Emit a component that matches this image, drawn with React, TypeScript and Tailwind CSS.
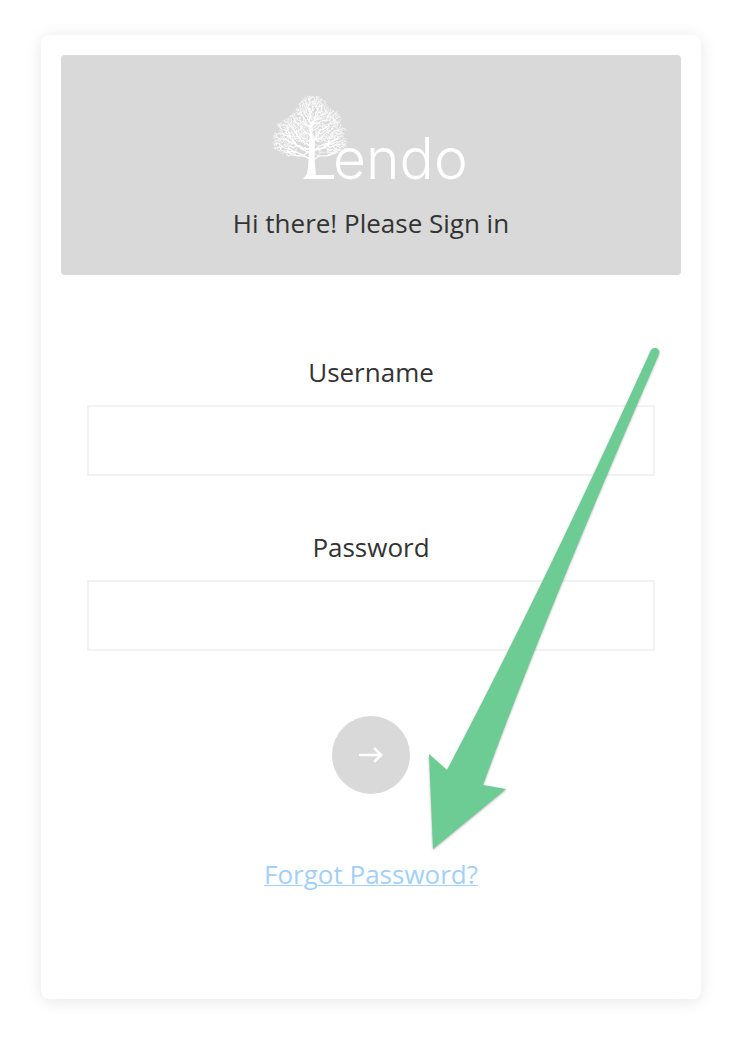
import type { FormEvent } from "react";

type Twig = { x: number; y: number; parent: number; depth: number; load: number };

// outline of the crown: [y, left, right]
const CROWN = [
  [1, 33, 44],
  [5, 28, 50],
  [14, 24, 57],
  [18, 22, 66],
  [24, 14, 67],
  [29, 3, 66],
  [34, 8, 71],
  [40, 2, 72],
  [48, -1, 74],
  [54, 1, 73],
  [61, 14, 60],
];

const TRUNK = [
  [39, 55],
  [39, 48],
  [38, 40],
  [38, 31],
];

function crownAt(y: number) {
  for (let i = 1; i < CROWN.length; i++) {
    const [y0, l0, r0] = CROWN[i - 1];
    const [y1, l1, r1] = CROWN[i];
    if (y <= y1) {
      const t = (y - y0) / (y1 - y0);
      return [l0 + (l1 - l0) * t, r0 + (r1 - r0) * t];
    }
  }
  return [38, 42];
}

// Scatter points over the crown and grow each one from its closest neighbour
function growTree() {
  let seed = 11;
  const random = () => {
    seed = (seed * 16807) % 2147483647;
    return seed / 2147483647;
  };

  const points: number[][] = [];
  while (points.length < 2600) {
    const x = random() * 76 - 1;
    const y = 1 + random() * 60;
    const [left, right] = crownAt(y);
    const edge = (random() - 0.5) * 5;
    const hollow = y > 47 && Math.abs(x - 39) < 16 && random() < 0.85;
    if (x > left + edge && x < right + edge && !hollow) points.push([x, y]);
  }
  const distance = (p: number[]) => Math.hypot(p[0] - 39, p[1] - 48);
  points.sort((a, b) => distance(a) - distance(b));

  const twigs: Twig[] = TRUNK.map(([x, y], i) => ({
    x,
    y,
    parent: i - 1,
    depth: i * 7,
    load: 0,
  }));

  points.forEach(([x, y]) => {
    let parent = 0;
    let best = Infinity;
    twigs.forEach((twig, i) => {
      const step = Math.hypot(twig.x - x, twig.y - y);
      const cost = step * 1.6 + twig.depth * 0.35;
      if (cost < best) {
        best = cost;
        parent = i;
      }
    });
    const from = twigs[parent];
    const depth = from.depth + Math.hypot(from.x - x, from.y - y);
    twigs.push({ x, y, parent, depth, load: 1 });
  });

  for (let i = twigs.length - 1; i > 0; i--) {
    const twig = twigs[i];
    if (twig.parent >= 0) twigs[twig.parent].load += twig.load;
  }
  return twigs;
}

const twigs = growTree();

function Logo() {
  return (
    <div className="flex h-[86px] w-[196px] text-white">
      <svg
        className="h-[86px] w-[60px] shrink-0 overflow-visible"
        viewBox="0 0 60 86"
        fill="none"
        stroke="currentColor"
        strokeLinecap="round"
        aria-hidden="true"
      >
        {twigs.slice(1).map((twig, i) => {
          const from = twigs[twig.parent];
          return (
            <path
              key={i}
              d={`M${from.x} ${from.y}L${twig.x} ${twig.y}`}
              strokeWidth={Math.min(3.5, 0.32 + Math.sqrt(twig.load) * 0.08)}
            />
          );
        })}
        <path d="M39 66C33 60 29 61 26 61S19 60 14 56" strokeWidth="1.3" />
        <path d="M39 60C33 55 30 56 25 51" strokeWidth="1.5" />
        <path d="M41 65C46 59 50 61 53 61S58 59 64 56" strokeWidth="1.2" />
        <path d="M40 57C45 52 48 49 57 48" strokeWidth="1.4" />
        <path
          d="M36 44C36 58 36 68 34 79C33 81 31 82 30 84L61 84L61 80L43 80C42 70 41 57 42 47L39 42Z"
          fill="currentColor"
          stroke="none"
        />
      </svg>
      <span className="pt-[22px] font-['Inter',sans-serif] text-[57px] leading-[84px] font-light">
        endo
      </span>
    </div>
  );
}

function Field({ id, label, type }: { id: string; label: string; type: string }) {
  return (
    <div>
      <label htmlFor={id} className="mb-[15px] block text-center">
        {label}
      </label>
      <input
        id={id}
        name={id}
        type={type}
        className="block h-[71px] w-full border-2 border-[#f2f2f2] bg-white px-4 outline-none focus:border-[#d9d9d9]"
      />
    </div>
  );
}

function Pointer() {
  return (
    <svg
      className="pointer-events-none absolute top-[305px] right-[34px] h-[520px] w-[248px] drop-shadow-[0_1px_1px_rgba(0,0,0,0.3)]"
      viewBox="0 0 248 520"
      aria-hidden="true"
    >
      <path
        d="M232 10C234 6 242 8 240 14Q125 278 64 445L87 449L14 509L10 414L28 430Q121 254 232 10Z"
        fill="#6dcc94"
      />
    </svg>
  );
}

export default function App() {
  const handleSubmit = (e: FormEvent) => {
    e.preventDefault();
  };

  return (
    <main className="min-h-screen bg-white pt-[35px] pr-[47px] pb-12 pl-[41px] font-['Open_Sans',sans-serif] text-[26px] leading-9 text-[#333333]">
      <div className="relative rounded-lg bg-white p-5 shadow-[0_2px_16px_rgba(0,0,0,0.1)]">
        <header className="flex flex-col items-center rounded bg-[#d9d9d9] pt-10 pb-[34px]">
          <Logo />
          <h1 className="mt-6">Hi there! Please Sign in</h1>
        </header>

        <form
          onSubmit={handleSubmit}
          className="flex flex-col px-[26px] pt-[79px] pb-[87px]"
        >
          <div className="flex flex-col gap-[53px]">
            <Field id="username" label="Username" type="text" />
            <Field id="password" label="Password" type="password" />
          </div>

          <button
            type="submit"
            aria-label="Sign in"
            className="mt-[65px] flex size-[78px] items-center justify-center self-center rounded-full bg-[#d9d9d9] text-white"
          >
            <svg
              className="h-4 w-6"
              viewBox="0 0 24 16"
              fill="none"
              stroke="currentColor"
              strokeWidth="2.6"
              aria-hidden="true"
            >
              <path d="M1.3 8H22" strokeLinecap="round" />
              <path d="M15.2 1.2L22 8L15.2 14.8" />
            </svg>
          </button>

          <a
            href="#forgot"
            className="mt-[62px] self-center text-[#a3cffb] underline decoration-1"
          >
            Forgot Password?
          </a>
        </form>

        <Pointer />
      </div>
    </main>
  );
}
